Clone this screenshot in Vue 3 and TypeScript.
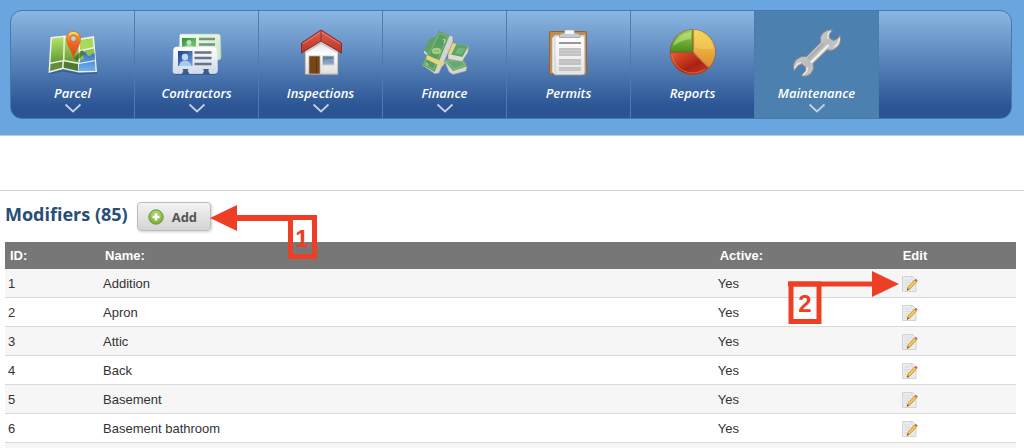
<script setup lang="ts">
interface NavItem {
  label: string
  icon: string
  menu: boolean
  active?: boolean
}

interface Modifier {
  id: number
  name: string
  active: boolean
}

const navItems: NavItem[] = [
  { label: 'Parcel', icon: 'map', menu: true },
  { label: 'Contractors', icon: 'cards', menu: true },
  { label: 'Inspections', icon: 'house', menu: true },
  { label: 'Finance', icon: 'money', menu: true },
  { label: 'Permits', icon: 'clipboard', menu: false },
  { label: 'Reports', icon: 'pie', menu: false },
  { label: 'Maintenance', icon: 'wrench', menu: true, active: true },
]

const total = 85

const modifiers: Modifier[] = [
  { id: 1, name: 'Addition', active: true },
  { id: 2, name: 'Apron', active: true },
  { id: 3, name: 'Attic', active: true },
  { id: 4, name: 'Back', active: true },
  { id: 5, name: 'Basement', active: true },
  { id: 6, name: 'Basement bathroom', active: true },
]
</script>

<template>
  <div class="page">
    <svg class="defs" width="0" height="0" aria-hidden="true">
      <defs>
        <linearGradient id="g-green" x1="0" y1="0" x2="0" y2="1">
          <stop offset="0" stop-color="#b9e468" /><stop offset="1" stop-color="#5f9a35" />
        </linearGradient>
        <linearGradient id="g-pin" x1="0" y1="0" x2="0" y2="1">
          <stop offset="0" stop-color="#f6b52c" /><stop offset="0.4" stop-color="#ee6a25" /><stop offset="1" stop-color="#d8401c" />
        </linearGradient>
        <linearGradient id="g-water" x1="0" y1="0" x2="0" y2="1">
          <stop offset="0" stop-color="#3f6fc4" /><stop offset="1" stop-color="#6fb2ee" />
        </linearGradient>
        <linearGradient id="g-card" x1="0" y1="0" x2="0" y2="1">
          <stop offset="0" stop-color="#ffffff" /><stop offset="1" stop-color="#cfd9e8" />
        </linearGradient>
        <linearGradient id="g-card-green" x1="0" y1="0" x2="1" y2="1">
          <stop offset="0" stop-color="#f6fcf4" /><stop offset="1" stop-color="#c9e6c5" />
        </linearGradient>
        <linearGradient id="g-photo" x1="0" y1="0" x2="1" y2="1">
          <stop offset="0" stop-color="#1d3f8c" /><stop offset="1" stop-color="#6fa3dc" />
        </linearGradient>
        <linearGradient id="g-photo-green" x1="0" y1="0" x2="1" y2="1">
          <stop offset="0" stop-color="#2f8f38" /><stop offset="1" stop-color="#86cc84" />
        </linearGradient>
        <linearGradient id="g-wall" x1="0" y1="0" x2="0" y2="1">
          <stop offset="0" stop-color="#d5d5d5" /><stop offset="0.4" stop-color="#ffffff" /><stop offset="1" stop-color="#dedede" />
        </linearGradient>
        <linearGradient id="g-roof" x1="0" y1="0" x2="0" y2="1">
          <stop offset="0" stop-color="#dc6350" /><stop offset="1" stop-color="#bd3224" />
        </linearGradient>
        <linearGradient id="g-window" x1="0" y1="0" x2="0" y2="1">
          <stop offset="0" stop-color="#4f7196" /><stop offset="1" stop-color="#9bb6ce" />
        </linearGradient>
        <linearGradient id="g-yellow" x1="0" y1="0" x2="0" y2="1">
          <stop offset="0" stop-color="#f5d44e" /><stop offset="1" stop-color="#df8b30" />
        </linearGradient>
        <linearGradient id="g-red" x1="0" y1="0" x2="1" y2="1">
          <stop offset="0" stop-color="#ea5a2c" /><stop offset="0.6" stop-color="#a82214" /><stop offset="1" stop-color="#c83a24" />
        </linearGradient>
        <linearGradient id="g-leaf" x1="0" y1="0" x2="0" y2="1">
          <stop offset="0" stop-color="#9ed053" /><stop offset="1" stop-color="#47911f" />
        </linearGradient>
        <linearGradient id="g-steel" x1="0" y1="0" x2="1" y2="1">
          <stop offset="0" stop-color="#d8d8d8" /><stop offset="0.5" stop-color="#bdbdbd" /><stop offset="1" stop-color="#dadada" />
        </linearGradient>
        <linearGradient id="g-paper" x1="0" y1="0" x2="0" y2="1">
          <stop offset="0" stop-color="#ffffff" /><stop offset="1" stop-color="#e4e4e4" />
        </linearGradient>
        <radialGradient id="g-add" cx="0.5" cy="0.3" r="0.7">
          <stop offset="0" stop-color="#b9dc7e" /><stop offset="1" stop-color="#76ab33" />
        </radialGradient>
      </defs>
    </svg>

    <header class="header">
      <nav class="nav" aria-label="Main">
        <a
          v-for="item in navItems"
          :key="item.label"
          href="#"
          class="nav-item"
          :class="{ active: item.active }"
        >
          <svg class="nav-icon" viewBox="0 0 52 52" aria-hidden="true">
            <g v-if="item.icon === 'map'">
              <path d="M2 47L16 44L32 47L50 46L50 47.500L32 48.500L16 45.500L3 48Z" fill="#1c3a63" opacity="0.400" />
              <path d="M3.500 11L18 9.500L32 12.500L47 10L50 46L32 46.500L16 43L1.500 47Z" fill="#f0f2e6" />
              <path d="M5 12.500L16.500 11L16 34L3.500 36.500Z" fill="url(#g-green)" />
              <path d="M3.500 38L15.500 35.500L15 41.800L3 45Z" fill="#608f3c" />
              <path d="M18 11.500L31.500 14L31.500 36.500L17.500 34Z" fill="url(#g-green)" />
              <path d="M17 35.500L31 38L31 45L16.500 41.800Z" fill="#507a31" />
              <path d="M33 14L45.500 12L46.500 21L33 24Z" fill="#a6da58" />
              <path d="M33 25.500L47 22.500L48.200 34L33 36.500Z" fill="#8cc350" />
              <path d="M32 40Q32 33 37 33Q34 27 39 26Q41 33 45 28L47.500 27L48.500 45L31.500 45Z" fill="url(#g-water)" />
              <path d="M32 37.500L48.500 34.500" stroke="#eef5fa" stroke-width="1.200" fill="none" />
              <path d="M27 32L35 24L38 27L30 35Z" fill="#315b25" opacity="0.650" />
              <path d="M26.500 33C25.500 25 19.500 20 19.500 12.500A7 7 0 0 1 33.500 12.500C33.500 20 27.500 25 26.500 33Z" fill="url(#g-pin)" stroke="#d46a24" stroke-width="0.700" />
              <circle cx="26.500" cy="12.500" r="3" fill="#b6d4d0" stroke="#d6672a" stroke-width="1" />
              <path d="M22 9Q26 4.500 31 9" stroke="#ffe36b" stroke-width="1.400" fill="none" />
            </g>

            <g v-else-if="item.icon === 'cards'">
              <path d="M10 8H47Q49.500 8 49.500 11L50 31Q50 34 47 34H8L8.500 10Q8.500 8 10 8Z" fill="url(#g-card-green)" stroke="#a9cdb6" stroke-width="0.700" />
              <rect x="11" y="12" width="14" height="10" fill="url(#g-photo-green)" />
              <circle cx="18" cy="16.500" r="2.500" fill="#c2e3bd" />
              <path d="M13 22Q14 18.500 18 19Q22 18.500 23 22Z" fill="#a6d49f" />
              <path d="M28 13H44M28 18.500H44M38 24H46" stroke="#719774" stroke-width="2.400" />
              <path d="M3 47.500H12L13 45H16L18 47.500H31L33 45H37L38 47.500H45L44 49H4Z" fill="#203d6b" opacity="0.450" />
              <path d="M5 21H43Q46 21 46 24L46.500 44Q46 47.500 44 47.500H39L37.500 44H33L31.500 47.500H18.500L17 44H12L10.500 47.500H4Q2 47.500 2 45L2.500 24Q3 21 5 21Z" fill="url(#g-card)" stroke="#e4ecf6" stroke-width="0.600" />
              <path d="M11.500 43H17.500L16.500 45H12.500ZM32 43H38L37 45H33Z" fill="#4a5a78" />
              <rect x="7" y="25" width="14.500" height="15" fill="url(#g-photo)" />
              <circle cx="14" cy="31" r="3.200" fill="#c1d8f4" />
              <path d="M8 40Q9 34.500 14 34.500Q19 34.500 20.500 40Z" fill="#a9caef" />
              <path d="M23.500 26.500H40.500M23.500 32H40.500M23.500 38H40.500" stroke="#6a7283" stroke-width="2.400" />
            </g>

            <g v-else-if="item.icon === 'house'">
              <path d="M10 22L26 13L43 22V48.500H10Z" fill="url(#g-wall)" stroke="#8c8c8c" stroke-width="0.800" />
              <path d="M11 24L26 15L42 24L42 27L26 18L11 27Z" fill="#a8a8a8" opacity="0.500" />
              <path d="M26 4L46.500 17V27L26 15L6.500 27V17Z" fill="url(#g-roof)" stroke="#8c2a26" stroke-width="1" />
              <path d="M26 6L8 17.700" stroke="#e78a79" stroke-width="0.800" />
              <path d="M26 6L45 17.700" stroke="#e78a79" stroke-width="0.800" />
              <path d="M26 5V15" stroke="#94251d" stroke-width="0.800" />
              <rect x="14" y="30" width="11" height="18" fill="#744619" stroke="#c3a98b" stroke-width="0.800" />
              <path d="M21.500 31V47" stroke="#5c3713" stroke-width="0.800" />
              <rect x="27.500" y="30" width="11.500" height="9" fill="url(#g-window)" stroke="#c7cdd4" stroke-width="0.900" />
              <path d="M29 36Q33 33 38 34" stroke="#8ea9c2" stroke-width="1" fill="none" />
              <path d="M26 48H43" stroke="#b7b7b7" stroke-width="1" />
            </g>

            <g v-else-if="item.icon === 'money'">
              <path d="M10 14L15 11L18 14L10 28L5 24.500Z" fill="#5da364" />
              <path d="M5 24.500L10 28V31L5 27Z" fill="#cdd3ce" />
              <path d="M25 34L44 33L48 41L47 45L34 48.500L30 46Z" fill="#d5d5d2" stroke="#8e9a96" stroke-width="0.500" />
              <path d="M25 34L44 33L48 40.500L34 45Z" fill="#68aa6c" />
              <path d="M27 35L43 34.500L46 39.500L35 43Z" fill="none" stroke="#8dc08c" stroke-width="0.900" />
              <path d="M33 17L49.500 20L49 26L43 35.500L29 33L29 27Z" fill="#dcdcd9" stroke="#8e9a96" stroke-width="0.500" />
              <path d="M33 17L49.500 20L43.500 31L29 28Z" fill="#5da364" />
              <path d="M33 17L37.500 18L32 29L29 28Z" fill="#e5d57e" />
              <path d="M39 21.500L46.500 22.500L42.500 28.500L36 27.500Z" fill="#74b277" />
              <path d="M20 5L34 10.500L34 16L20 47L16 48L3 39Z" fill="#d4d4d1" stroke="#848d88" stroke-width="0.600" />
              <path d="M20 5L30.500 9.500L15.500 46L3 38.500Z" fill="#599f5f" />
              <path d="M20.500 7L28.500 10.500L14.500 43.500L5 38Z" fill="none" stroke="#84ba83" stroke-width="1" />
              <path d="M8 29L24 36L26 36L24 40L21 40L7 33Z" fill="#e6d67d" />
              <ellipse cx="17.500" cy="25" rx="4.500" ry="3.200" fill="#a9cd82" />
              <path d="M15 25H20" stroke="#79b06c" stroke-width="0.900" />
              <path d="M24 13L26 14L25 17M7 37L9 39" stroke="#b8dab3" stroke-width="1.100" fill="none" />
            </g>

            <g v-else-if="item.icon === 'clipboard'">
              <ellipse cx="25.500" cy="46" rx="22" ry="4" fill="#6d7688" opacity="0.350" />
              <rect x="6.500" y="5.500" width="37" height="42.500" rx="1.500" fill="#c98a45" stroke="#9b642d" stroke-width="1" />
              <path d="M9 12L12 9H42V46L39 49H12L9 46Z" fill="#ececec" stroke="#a6a6a6" stroke-width="0.600" />
              <rect x="12" y="10" width="29.500" height="38.500" fill="url(#g-paper)" stroke="#b7b7b7" stroke-width="0.600" />
              <rect x="16" y="16" width="22" height="2" fill="#989898" />
              <rect x="16" y="22" width="22" height="8" fill="#c2c2c2" />
              <rect x="16" y="33" width="22" height="6" fill="#c2c2c2" />
              <rect x="16" y="41" width="22" height="4" fill="#c2c2c2" />
              <path d="M16 24.500H38M16 27.500H38M16 36H38M16 43H38" stroke="#d5d5d5" stroke-width="0.600" />
              <path d="M21.500 7V5Q21.500 3.500 23 3.500H30Q31.500 3.500 31.500 5V7Q36.500 7 37 9.500V11.500H16.500V9.500Q17 7 21.500 7Z" fill="#c7cbd1" stroke="#9097a0" stroke-width="0.700" />
              <path d="M22 4.500H31V8H22Z" fill="#f3f4f6" />
            </g>

            <g v-else-if="item.icon === 'pie'">
              <circle cx="25.700" cy="26.300" r="23" fill="#8f5a34" />
              <path d="M26.500 26V3.800A22.300 22.300 0 0 1 42 41.500Z" fill="url(#g-yellow)" />
              <path d="M25.500 27L41 42A22 22 0 0 1 3.500 27Z" fill="url(#g-red)" />
              <path d="M25.300 25.500H3.500A22.200 22.200 0 0 1 25.300 3.800Z" fill="url(#g-leaf)" />
              <path d="M6 20A20 20 0 0 1 24 6V13Q14 14 6 20Z" fill="#d3ec93" opacity="0.500" />
              <path d="M28 5.500A20.500 20.500 0 0 1 46.500 23Q37 24 28 22Z" fill="#f7e17a" opacity="0.350" />
              <path d="M5 29A21 21 0 0 0 38 43M27 27.500L41 41" fill="none" stroke="#e97a60" stroke-width="0.900" opacity="0.800" />
            </g>

            <g v-else>
              <path d="M41.500 4L38.500 8L38.500 12L42.500 14.500L46 13L49 9.500Q51 17 46 21.500Q42 25.500 36 24L22 37.500Q24 43 20 47.500Q16 51.500 10 49.800L14.500 45L14.500 41L10.500 38L7 40L3 45Q1 38 5.500 33.500Q10 29.500 15.500 30.500L29.500 16.500Q28 11 32 7Q36 3 41.500 4Z" fill="url(#g-steel)" stroke="#868b8f" stroke-width="1" />
              <path d="M37 19.500L20.500 36" stroke="#f4f4f4" stroke-width="2" stroke-linecap="round" />
              <path d="M31.500 18.500L17.500 32.500" stroke="#aeaeae" stroke-width="2.400" stroke-linecap="round" />
              <path d="M39.500 5L37 8V13M48.500 12Q48 18 43 21M12 49L16 45V41M3.500 42L6.500 38L10 36.500" stroke="#efefef" stroke-width="1.200" fill="none" />
            </g>
          </svg>
          <span class="nav-label">{{ item.label }}</span>
          <svg v-if="item.menu" class="chevron" viewBox="0 0 18 10" aria-hidden="true">
            <path d="M1.500 1.500L9 8.500L16.500 1.500" fill="none" stroke="#c3d0e6" stroke-width="1.800" />
          </svg>
        </a>
      </nav>
    </header>

    <main class="content">
      <div class="title-row">
        <h1>Modifiers ({{ total }})</h1>
        <button type="button" class="add">
          <svg viewBox="0 0 16 16" aria-hidden="true">
            <circle cx="8" cy="8" r="7.200" fill="url(#g-add)" stroke="#6b9a38" stroke-width="1" />
            <path d="M8 4.500V11.500M4.500 8H11.500" stroke="#ffffff" stroke-width="2.400" />
          </svg>
          <span>Add</span>
        </button>
      </div>

      <table>
        <colgroup>
          <col class="col-id" />
          <col class="col-name" />
          <col class="col-active" />
          <col />
        </colgroup>
        <thead>
          <tr>
            <th scope="col">ID:</th>
            <th scope="col">Name:</th>
            <th scope="col">Active:</th>
            <th scope="col">Edit</th>
          </tr>
        </thead>
        <tbody>
          <tr v-for="row in modifiers" :key="row.id">
            <td>{{ row.id }}</td>
            <td>{{ row.name }}</td>
            <td>{{ row.active ? 'Yes' : 'No' }}</td>
            <td>
              <a href="#" class="edit" :aria-label="`Edit ${row.name}`">
                <svg viewBox="0 0 18 18" aria-hidden="true">
                  <path d="M1.500 1.500H11L15 5V16.500H1.500Z" fill="#e9ebec" stroke="#c9cccd" stroke-width="0.800" />
                  <path d="M11 1.500V5H15Z" fill="#ffffff" stroke="#bfc3c4" stroke-width="0.600" />
                  <path d="M3.500 5H9M3.500 7.500H10M3.500 10H8M3.500 12.500H6" stroke="#d9dcdd" stroke-width="1" />
                  <path d="M6 15.500L7 12L13.500 5L15.500 7L9 14Z" fill="#f0b93c" stroke="#b98530" stroke-width="0.600" />
                  <path d="M8 13L14.500 6" stroke="#fbe08a" stroke-width="0.800" />
                  <path d="M6 15.500L6.700 13.200L8 14.500Z" fill="#5c4a33" />
                  <path d="M13.500 5L14.800 3.700L16.700 5.600L15.500 7Z" fill="#c9615a" />
                </svg>
              </a>
            </td>
          </tr>
          <tr aria-hidden="true"><td colspan="4"></td></tr>
        </tbody>
      </table>

      <svg class="callout callout-add" viewBox="0 0 108 56" role="img" aria-label="Step 1">
        <path d="M0 14L27 1V27Z" fill="#ee3f26" />
        <path d="M26 11H107V16H80V17H26Z" fill="#ee3f26" />
        <rect x="80.500" y="13.500" width="24" height="39" fill="none" stroke="#ee3f26" stroke-width="5" />
        <text x="92" y="43" text-anchor="middle">1</text>
      </svg>

      <svg class="callout callout-edit" viewBox="0 0 111 56" role="img" aria-label="Step 2">
        <path d="M111 14L84 1V27Z" fill="#ee3f26" />
        <path d="M0 11.500H85V16.500H0Z" fill="#ee3f26" />
        <rect x="3" y="14" width="28" height="37.500" fill="none" stroke="#ee3f26" stroke-width="5" />
        <text x="17" y="42" text-anchor="middle">2</text>
      </svg>
    </main>
  </div>
</template>

<style>
body {
  margin: 0;
  background: #ffffff;
}
</style>

<style scoped>
.page {
  height: 100vh;
  overflow: hidden;
  font-family: Arial, "Liberation Sans", sans-serif;
  font-size: 13px;
  color: #333333;
}

.defs {
  position: absolute;
}

.header {
  padding: 10px 12px 16px 10px;
  background: #69a6df;
  border-bottom: 1px solid #c5cad4;
}

.nav {
  display: flex;
  border: 1px solid #4679ae;
  border-radius: 12px;
  overflow: hidden;
  background: linear-gradient(to bottom, #8ab7e3 0%, #2b5494 90%, #2b5494 100%);
}

.nav-item {
  box-sizing: border-box;
  width: 124px;
  height: 107px;
  padding-top: 15px;
  display: flex;
  flex-direction: column;
  align-items: center;
  border-right: 1px solid #4a7cad;
  color: #ffffff;
  text-decoration: none;
}

.nav-item.active {
  background: #4c80ae;
}

.nav-icon {
  width: 52px;
  height: 52px;
}

.nav-label {
  margin-top: 5px;
  font: italic 600 13px/20px "Trebuchet MS", "Open Sans", sans-serif;
}

.chevron {
  width: 18px;
  height: 10px;
}

.content {
  position: relative;
  margin-top: 54px;
  border-top: 1px solid #d4d4d4;
  padding: 11px 8px 0 5px;
}

.title-row {
  display: flex;
  align-items: flex-start;
  gap: 9px;
  height: 40px;
}

h1 {
  margin: 0;
  font: 700 18px/24px "Trebuchet MS", "Open Sans", sans-serif;
  color: #274e74;
}

.add {
  display: flex;
  align-items: center;
  gap: 8px;
  height: 29px;
  padding: 0 13px 0 10px;
  border: 1px solid #bdbdbd;
  border-radius: 4px;
  background: linear-gradient(to bottom, #f3f3f3, #d4d4d4);
  box-shadow: 1px 1px 3px #d0d0d0;
  color: #555555;
  font: 700 13px/20px "Trebuchet MS", "Open Sans", sans-serif;
}

.add svg {
  width: 16px;
  height: 16px;
}

table {
  width: 100%;
  table-layout: fixed;
  border-collapse: separate;
  border-spacing: 0;
}

th {
  height: 27px;
  padding: 0 0 0 5px;
  background: #777777;
  color: #ffffff;
  font-weight: 700;
  line-height: 16px;
  text-align: left;
}

td {
  box-sizing: border-box;
  height: 29px;
  padding: 2px 0 0 3px;
  border-bottom: 1px solid #d9d9d9;
  line-height: 16px;
}

tbody tr:nth-child(odd) {
  background: #f6f6f6;
}

.col-id {
  width: 9.4%;
}

.col-name {
  width: 60.8%;
}

.col-active {
  width: 18.1%;
}

.edit {
  display: block;
  height: 18px;
}

.edit svg {
  display: block;
  width: 18px;
  height: 18px;
}

.callout {
  position: absolute;
  height: 56px;
  pointer-events: none;
}

.callout text {
  font: 700 24px "Liberation Sans", sans-serif;
  fill: #ee3f26;
}

.callout-add {
  top: 13px;
  left: 210px;
  width: 108px;
}

.callout-edit {
  top: 79px;
  right: 125px;
  width: 111px;
}
</style>
